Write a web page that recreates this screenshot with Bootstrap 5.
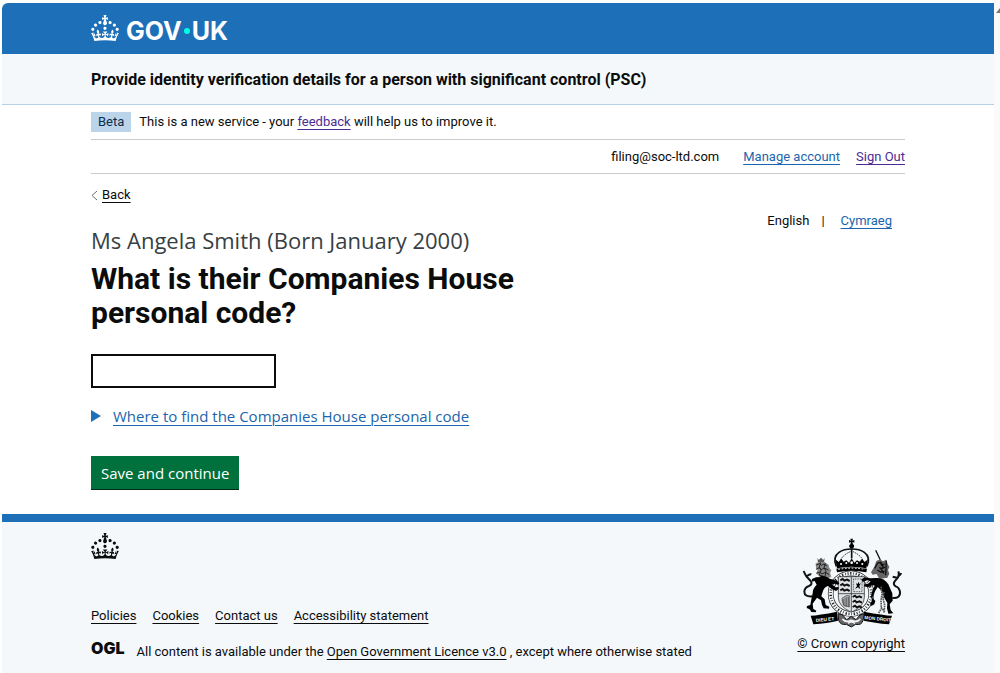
<!DOCTYPE html>
<html lang="en">
<head>
<meta charset="utf-8">
<meta name="viewport" content="width=device-width, initial-scale=1">
<title>What is their Companies House personal code? - GOV.UK</title>
<link rel="stylesheet" href="https://cdn.jsdelivr.net/npm/bootstrap@5.3.0/dist/css/bootstrap.min.css">
<style>
  :root { --brand: #1d70b8; --ink: #0b0c0c; --tint: #f4f8fb; --link: #1a65ad; --visited: #4c2c92; }
  body { font: 13px/20px Roboto, "Liberation Sans", sans-serif; color: var(--ink); background: #fff; }
  .page-shell { min-height: 100vh; padding: 3px 6px 0 2px; background: linear-gradient(to left, #fafafa 6px, #fff 6px); }
  .wrap { width: 100%; max-width: 814px; margin-inline: auto; }
  a { color: var(--link); text-decoration-thickness: 1px; text-underline-offset: 3px; }
  a.seen { color: var(--visited); }
  a.plain { color: var(--ink); }
  .brand-bar { background: var(--brand); color: #fff; border-radius: 6px 0 0 0; height: 51px; padding-top: 4px; }
  .brand-bar a { color: #fff; font: 700 25px/30px Inter, sans-serif; }
  .brand-bar svg { margin: 0 7px 6px 0; }
  .brand-dot { width: 6px; height: 6px; background: #00ffe0; margin: 0 2px; }
  .service-bar { background: var(--tint); border-bottom: 1px solid #b5d0e7; height: 51px; padding-top: 2px; font-size: 16px; }
  .rule { border-bottom: 1px solid #c9cccf; }
  .phase { height: 35px; }
  .account { height: 34px; }
  .phase-tag { background: #bbd4ea; color: #0c2d4a; padding: 0 7px; line-height: 20px; }
  .back-row { padding-top: 11px; margin-bottom: 18px; }
  .caption-xl { font: 22px/34px "Open Sans", "Noto Sans", sans-serif; color: #383f43; margin-bottom: 5px; }
  h1 { font-size: 30px; line-height: 34px; font-weight: 700; max-width: 480px; }
  .code-input { width: 185px; height: 34px; border: 2px solid var(--ink); border-radius: 0; }
  .code-input:focus { border-color: var(--ink); box-shadow: 0 0 0 3px #fd0; }
  .body-text { font: 15px/20px "Open Sans", sans-serif; }
  details { margin: 18px 0 30px; }
  summary { list-style: none; color: var(--link); }
  summary span { text-decoration: underline; text-decoration-thickness: 1px; text-underline-offset: 3px; }
  .btn-go { background: #00703c; color: #fff; border: 0; border-radius: 0; padding: 7px 10px; box-shadow: inset 0 -1px 0 #002d18; }
  .btn-go:hover { background: #005a30; color: #fff; }
  .lang-list { padding: 37px 13px 0 0; }
  .site-footer { background: var(--tint); border-top: 8px solid var(--brand); min-height: 159px; }
  .footer-crown { margin: 11px 0 47px; }
  .arms { margin: 0 auto 6px; }
  .ogl { font: 900 16px/20px Inter, sans-serif; }
  .scroll-cue { top: 8px; right: 0; }
</style>
</head>
<body>
<svg class="d-none" aria-hidden="true">
  <symbol id="crown" viewBox="0 0 32 30"><path d="M22.6 10.4c-1 .4-2-.1-2.4-1-.4-.9.1-2 1-2.4.9-.4 2 .1 2.4 1s-.1 2-1 2.4m-5.9 6.7c-.9.4-2-.1-2.4-1-.4-.9.1-2 1-2.4.9-.4 2 .1 2.4 1s-.1 2-1 2.4m10.8-3.7c-1 .4-2-.1-2.4-1-.4-.9.1-2 1-2.4.9-.4 2 .1 2.4 1s0 2-1 2.4m3.3 4.8c-1 .4-2-.1-2.4-1-.4-.9.1-2 1-2.4.9-.4 2 .1 2.4 1s-.1 2-1 2.4M17 4.7l2.3 1.2V2.5l-2.3.7-.2-.2.9-3h-3.4l.9 3-.2.2c-.1.1-2.3-.7-2.3-.7v3.4L15 4.7c.1.1.1.2.2.2l-1.3 4c-.1.2-.1.4-.1.6 0 1.1.8 2 1.9 2.2h.7c1-.2 1.9-1.1 1.9-2.1 0-.2 0-.4-.1-.6l-1.3-4c-.1-.2 0-.2.1-.3m-7.6 5.7c.9.4 2-.1 2.4-1 .4-.9-.1-2-1-2.4-.9-.4-2 .1-2.4 1s0 2 1 2.4m-5 3c.9.4 2-.1 2.4-1 .4-.9-.1-2-1-2.4-.9-.4-2 .1-2.4 1s.1 2 1 2.4m-3.2 4.8c.9.4 2-.1 2.4-1 .4-.9-.1-2-1-2.4-.9-.4-2 .1-2.4 1s0 2 1 2.4m14.8 11c4.4 0 8.6.3 12.3.8 1.1-4.5 2.4-7 3.7-8.8l-2.5-.9c.2 1.3.3 1.9 0 2.7-.4-.4-.8-1.1-1.1-2.3l-1.2 4c.7-.5 1.3-.8 2-.9-1.1 2.5-2.6 3.1-3.5 3-1.1-.2-1.7-1.2-1.5-2.1.3-1.2 1.5-1.5 2.1-.1 1.1-2.3-.8-3-2-2.3 1.9-1.9 2.1-3.5.6-5.6-2.1 1.6-2.1 3.2-1.2 5.5-1.2-1.4-3.2-.6-2.5 1.6.9-1.4 2.1-.5 1.9.8-.2 1.1-1.7 2.1-3.5 1.9-2.7-.2-2.9-2.1-2.9-3.6.7-.1 1.9.5 2.9 1.9l.4-4.3c-1.1 1.1-2.1 1.4-3.2 1.4.4-1.2 2.1-3 2.1-3h-5.4s1.7 1.9 2.1 3c-1.1 0-2.1-.2-3.2-1.4l.4 4.3c1-1.4 2.2-2 2.9-1.9-.1 1.5-.2 3.4-2.9 3.6-1.9.2-3.4-.8-3.5-1.9-.2-1.3 1-2.2 1.9-.8.7-2.3-1.2-3-2.5-1.6.9-2.2.9-3.9-1.2-5.5-1.5 2-1.3 3.7.6 5.6-1.2-.7-3.1 0-2 2.3.6-1.4 1.8-1.1 2.1.1.2.9-.3 1.9-1.5 2.1-.9.2-2.4-.5-3.5-3 .6 0 1.2.3 2 .9l-1.2-4c-.3 1.1-.7 1.9-1.1 2.3-.3-.8-.2-1.4 0-2.7l-2.9.9C1.3 23 2.6 25.5 3.7 30c3.7-.5 7.9-.8 12.3-.8"/></symbol>
</svg>

<div class="page-shell d-flex flex-column position-relative">
  <svg class="scroll-cue position-absolute" width="4" height="5" aria-hidden="true"><path d="M0 5 4 0V5z" fill="#777"/></svg>

  <header>
    <div class="brand-bar d-flex align-items-center">
      <div class="wrap">
        <a href="#" class="d-inline-flex align-items-center text-decoration-none" aria-label="GOV.UK">
          <svg width="28" height="26" fill="#fff" aria-hidden="true"><use href="#crown"/></svg>
          <span>GOV</span><span class="brand-dot rounded-circle"></span><span>UK</span>
        </a>
      </div>
    </div>
    <div class="service-bar d-flex align-items-center fw-bold"><div class="wrap">Provide identity verification details for a person with significant control (PSC)</div></div>
  </header>

  <div class="wrap">
    <div class="phase rule d-flex align-items-center">
      <strong class="phase-tag fw-normal me-2">Beta</strong>
      <span>This is a new service - your <a href="#" class="seen">feedback</a> will help us to improve it.</span>
    </div>
    <nav class="account rule d-flex justify-content-end align-items-center" aria-label="Account">
      <span class="me-4">filing@soc-ltd.com</span>
      <a href="#" class="me-3">Manage account</a>
      <a href="#" class="seen">Sign Out</a>
    </nav>
  </div>

  <main class="wrap flex-grow-1">
    <div class="d-flex justify-content-between">
      <div>
        <div class="back-row d-flex align-items-center">
          <svg width="7" height="11" class="me-1" fill="none" stroke="#6b6e70" aria-hidden="true"><path d="M6 1 1 5.500 6 10"/></svg>
          <a href="#" class="plain">Back</a>
        </div>
        <div class="caption-xl">Ms Angela Smith (Born January 2000)</div>
        <h1 class="mb-4"><label for="code">What is their Companies House personal code?</label></h1>
      </div>
      <nav class="lang-list d-flex align-items-start" aria-label="Language">
        <span>English</span><span class="px-2 mx-1">|</span><a href="#" class="ms-1" lang="cy">Cymraeg</a>
      </nav>
    </div>
    <form class="mb-3">
      <input class="form-control code-input" id="code" type="text">
      <details class="body-text">
        <summary class="d-flex align-items-center">
          <svg width="10" height="12" aria-hidden="true" fill="#1d70b8"><path d="M0 0 10 6 0 12z"/></svg>
          <span class="ms-2 ps-1">Where to find the Companies House personal code</span>
        </summary>
      </details>
      <button type="button" class="btn btn-go body-text">Save and continue</button>
    </form>
  </main>

  <footer class="site-footer">
    <div class="wrap d-flex justify-content-between align-items-start">
      <div>
        <svg class="d-block footer-crown" width="28" height="26" fill="#0b0c0c" aria-hidden="true"><use href="#crown"/></svg>
        <div class="d-flex gap-3">
          <a class="plain" href="#">Policies</a><a class="plain" href="#">Cookies</a><a class="plain" href="#">Contact us</a><a class="plain" href="#">Accessibility statement</a>
        </div>
        <div class="d-flex mt-2 pt-1">
          <span class="ogl me-2 pe-1">OGL</span>
          <span class="pt-1">All content is available under the <a class="plain" href="#">Open Government Licence v3.0</a> , except where otherwise stated</span>
        </div>
      </div>
      <a class="plain pt-3 text-center" href="#">
        <svg class="d-block arms" width="102" height="90" viewBox="57 27 306 270" aria-hidden="true">
          <path d="M166 112q-12-28 8-42 14-10 38-10t38 10q20 14 8 42" fill="none" stroke="#111" stroke-width="5"/>
          <path d="M177 108q-4-25 35-42 39 17 35 42" fill="none" stroke="#111" stroke-width="3" stroke-dasharray="4 3"/>
          <path d="M208 29h8l-2 6 6-2v8l-6-2 2 7a7 7 0 1 1-8 0l2-7-6 2v-8l6 2z"/>
          <path d="M212 58v30" stroke="#111" stroke-width="5"/>
          <path d="M163 91l10 8 8-10 7 9 8-4 8 7 8-13 8 13 8-7 8 4 7-9 8 10 10-8-5 27q-44-9-88 0z"/>
          <path d="M166 119q46-9 92 0l-2 11q-44-9-88 0z"/>
          <g fill="#fff"><circle cx="180" cy="105" r="3"/><circle cx="196" cy="102" r="3"/><circle cx="212" cy="101" r="4"/><circle cx="228" cy="102" r="3"/><circle cx="244" cy="105" r="3"/></g>
          <path d="M172 121q40-7 80 0" fill="none" stroke="#fff" stroke-width="3" stroke-dasharray="5 5"/>
          <!-- garter -->
          <circle cx="210" cy="194" r="61" fill="#f4f8fb" stroke="#222" stroke-width="17"/>
          <circle cx="210" cy="194" r="61" fill="none" stroke="#f4f8fb" stroke-width="13"/>
          <circle cx="210" cy="194" r="61" fill="none" stroke="#222" stroke-width="8" stroke-dasharray="3 5 4 6 2 5"/>
          <!-- shield -->
          <path d="M172 143h78v62q0 27-39 45-39-18-39-45z" fill="#dfe3e6" stroke="#111" stroke-width="2"/>
          <path d="M211 143v106M172 194h78" stroke="#111" stroke-width="2"/>
          <g id="lions" fill="none" stroke="#111" stroke-width="6"><path d="m178 154 7-4 5 5 8-3 8 4M178 169l7-4 5 5 8-3 8 4M178 184l7-4 5 5 8-3 8 4"/></g>
          <use href="#lions" x="37" y="50"/>
          <path d="M217 150h26v38h-26z" fill="none" stroke="#111" stroke-width="2" stroke-dasharray="3 2"/>
          <path d="m222 180 6-9-3-8 5 2 2-7 3 7 5-3-5 9 3 10-7-6z"/>
          <path d="M183 208q14-12 22-8v34l-15-4q-8-11-7-22M187 210v20M192 206v26M197 204v29M202 204v29" fill="#bbb" stroke="#333" stroke-width="2"/>
          <!-- lion -->
          <path d="M109 87l4 6 7-7 7 7 4-6-2 14h-18z" fill="#555"/>
          <path d="M104 103l13-5 14 1 12 9 2 9 6 7-4 8 4 11-12 6-22-4-11-12 4-9-5-8z" fill="#888"/>
          <path d="M106 108l10-4 5 5 8-4 9 6M105 121l10-5 6 6 9-5 12 6M106 133l10-4 7 6 10-5 12 7M119 100l-4 14 5 10-5 14M133 103l-4 13 6 11-3 15" fill="none" stroke="#222" stroke-width="3"/>
          <path d="M114 138q20 2 32 11l14 4 12 5 3 7-5 2-8-3-10 2 12 9 8-1 1 6-8 6-13-6-11-9q-12 3-16 18l-4 13 10 9 3 17 11 5-1 6-16-1-5-10-3-14-12-8-13 18 2 16 9 5-2 5-13-1-5-8-9-4 1-6 10-3 3-17 4-18q0-15 12-26l-6-11-9 2 1-8 12-5 15-1z"/>
          <path d="M94 202q-24 2-24-14 1-13 14-17 12-5 5-15l-13-14q-5-8-8-16M78 141q8-6 13-5" fill="none" stroke="#111" stroke-width="6"/>
          <!-- unicorn -->
          <path d="m284 64 14 29" stroke="#111" stroke-width="4"/>
          <path d="M286 96l11-5 9 6 10-5 4 13 5 9-4 9 4 11-6 12-24 4-8-15-12 2-5-7 10-17z" fill="#666"/>
          <path d="M281 118l9-16 8-2 4 9 9-4M295 115l7 5 10-6M300 100l6 12-5 10 8 12M289 123l10 6 12-2M316 95l-2 44" fill="none" stroke="#111" stroke-width="4"/>
          <path d="M286 147q22-2 36 19 6 14 12 27l1 22-9 11 3 17 8 10-15 1-4-16 1-16-10-17-6-18-13-13-15-6-14 7-12-3 1-6 11-2 9-7-12-3-13 5-4-8 11-6 16 3z"/>
          <path d="M294 168l-11 17-9 21 9 10-3 10-9 5-4-7 6-9-3-13 5-21 10-17z"/>
          <path d="M300 173l3 22-3 20 1 22M309 189l-3 19 5 20-2 24M293 252l9-15 9 12" fill="none" stroke="#555" stroke-width="5" stroke-dasharray="5 2"/>
          <path d="M334 207q25 2 23-19-3-13-13-16-9-6-3-15l10-12q5-8 1-18M335 143l16 4M352 142q8-5 8-10" fill="none" stroke="#111" stroke-width="6"/>
          <!-- motto scroll -->
          <path d="M89 260q24-1 79-12l3 27q-32 8-74 11z"/>
          <path d="M333 260q-24-1-84-12l-1 27q32 7 76 11z"/>
          <path d="M171 254l14 4 12 14 14-10 14 10 12-14 13-4-4 20q-4 16-22 12l-13 8-15-8q-18 3-23-12z" fill="#666" stroke="#111" stroke-width="3"/>
          <path d="M184 270q10 12 27 4 17 8 27-4M201 283q10-8 21 0" fill="none" stroke="#f4f8fb" stroke-width="5"/>
          <g fill="#fff" font-family="Liberation Sans" font-weight="700" font-size="14"><text transform="rotate(-6 105 279)" x="105" y="279">DIEU ET</text><text transform="rotate(6 250 270)" x="250" y="270">MON DROIT</text></g>
        </svg>
        © Crown copyright
      </a>
    </div>
  </footer>
</div>
<script src="https://cdn.jsdelivr.net/npm/bootstrap@5.3.0/dist/js/bootstrap.bundle.min.js"></script>
</body>
</html>
